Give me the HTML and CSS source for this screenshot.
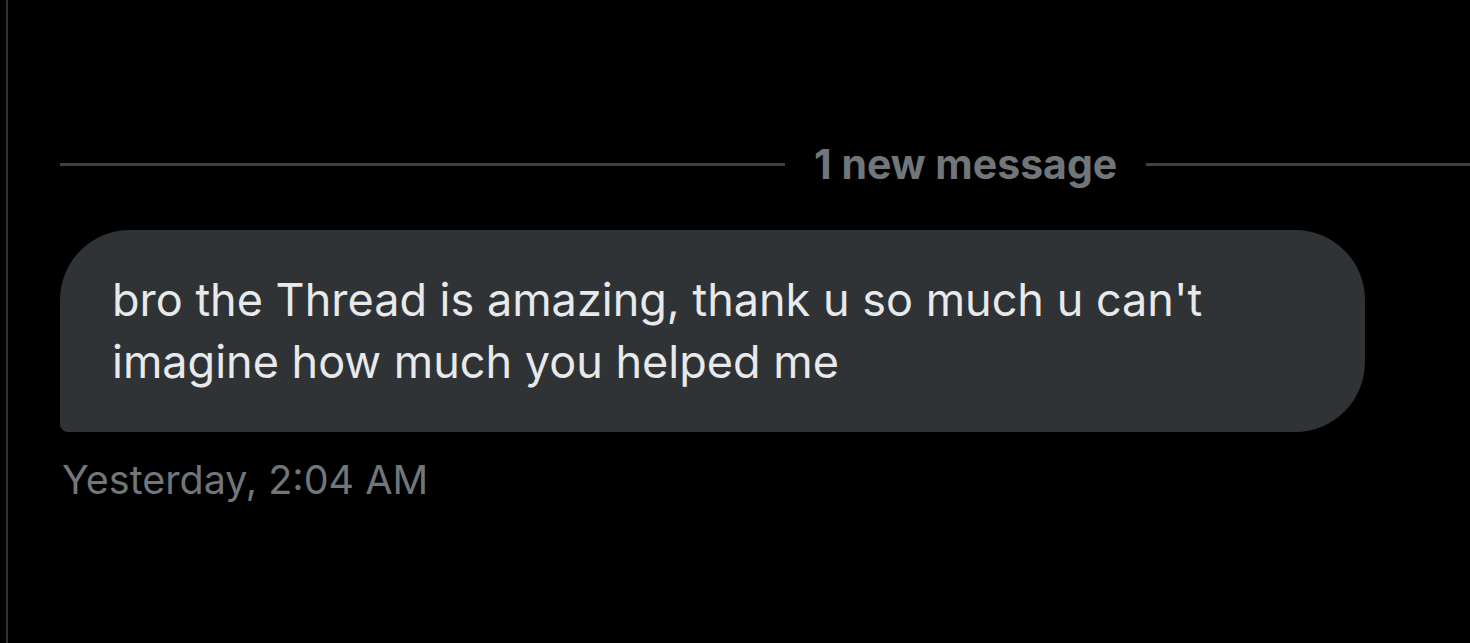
FILE: index.html
```html
<!DOCTYPE html>
<html>
<head>
<meta charset="utf-8">
<link rel="stylesheet" href="styles.css">
</head>
<body>
<div class="pane">
  <div class="divider">
    <span class="line line-left"></span>
    <span class="divider-text">1 new message</span>
    <span class="line line-right"></span>
  </div>
  <div class="message">
    <div class="bubble">bro the Thread is amazing, thank u so much u can't imagine how much you helped me</div>
    <div class="time">Yesterday, 2:04 AM</div>
  </div>
</div>
</body>
</html>
```
FILE: styles.css
```css
html, body {
  margin: 0;
  padding: 0;
  background: #000;
  height: 100%;
  overflow: hidden;
}
body {
  font-family: "Inter", "Liberation Sans", sans-serif;
}
.pane {
  margin-left: 6px;
  border-left: 2px solid #2f3336;
  height: 100%;
  padding-left: 52px;
  padding-top: 139px;
  box-sizing: border-box;
}
.divider {
  display: flex;
  align-items: center;
  height: 50px;
  gap: 29px;
}
.line {
  height: 3px;
  background: #3e4144;
}
.line-left {
  flex: 0 0 725px;
}
.line-right {
  flex: 1;
}
.divider-text {
  color: #71767b;
  font-size: 41px;
  font-weight: 700;
  white-space: nowrap;
}
.message {
  margin-top: 41px;
}
.bubble {
  width: 1305px;
  box-sizing: border-box;
  background: #2f3336;
  color: #e7e9ea;
  font-size: 45px;
  line-height: 62px;
  padding: 39px 52px;
  border-radius: 70px 70px 70px 8px;
}
.time {
  margin-top: 26px;
  padding-left: 2px;
  color: #71767b;
  font-size: 39.5px;
  line-height: 44px;
}
```
